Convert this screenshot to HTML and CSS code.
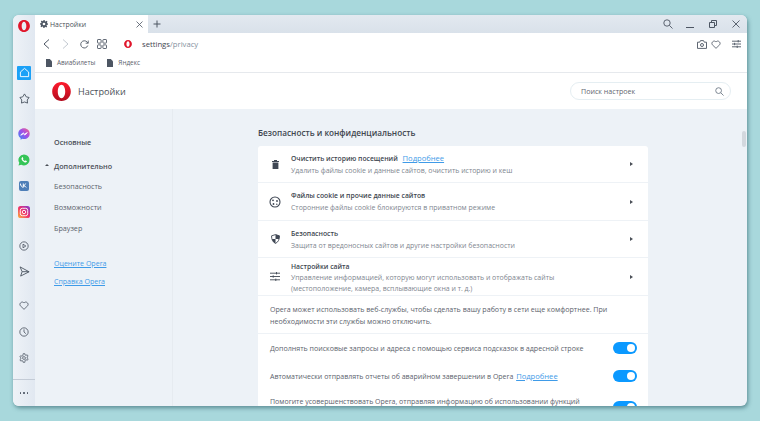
FILE: index.html
```html
<!DOCTYPE html>
<html lang="ru">
<head>
  <meta charset="UTF-8">
  <title>Настройки</title>
  <link rel="stylesheet" href="styles.css">
</head>
<body>
  <div class="window">
    <!-- left rail with sidebar shortcuts -->
    <aside class="rail">
      <div class="slot slot-logo">
        <svg width="12" height="12" viewBox="0 0 20 20"><path fill="#e0162b" fill-rule="evenodd" d="M10 0c5.600 0 9.800 4.400 9.800 10S15.600 20 10 20 .2 15.600.2 10 4.400 0 10 0zm0 3c-2.200 0-3.900 3-3.900 7s1.700 7 3.900 7 3.900-3 3.900-7-1.700-7-3.900-7z"/></svg>
      </div>
      <div class="slot slot-home">
        <span class="home-box">
          <svg width="11" height="11" viewBox="0 0 12 12" fill="none" stroke="#fff" stroke-width="1"><path d="M1.500 5.500 6 1.500l4.500 4v5h-9z"/></svg>
        </span>
      </div>
      <div class="slot">
        <svg width="11" height="11" viewBox="0 0 12 12" fill="none" stroke="#4d5663" stroke-width="1" stroke-linejoin="round"><path d="M6 1 7.900 4.200 11 4.900 9 7.600 9.300 11 6 9.800 2.700 11 3 7.600 1 4.900 4.100 4.200z"/></svg>
      </div>
      <div class="slot slot-gap">
        <svg width="12" height="12" viewBox="0 0 12 12"><defs><linearGradient id="msg" x1="0" y1="1" x2="1" y2="0"><stop offset="0" stop-color="#2f8bf5"/><stop offset=".55" stop-color="#a44ee8"/><stop offset="1" stop-color="#f76b7e"/></linearGradient></defs><path fill="url(#msg)" d="M6 .3c3.200 0 5.700 2.300 5.700 5.400S9.200 11 6 11c-.6 0-1.100-.1-1.600-.2L2.600 11.700V10C1.100 9 .3 7.500.3 5.700.3 2.600 2.800.3 6 .3z"/><path fill="none" stroke="#fff" stroke-width=".9" d="M2.700 7.200 5 4.800l1.600 1.300 2.700-1.500-2.300 2.500-1.600-1.300z"/></svg>
      </div>
      <div class="slot">
        <svg width="12" height="12" viewBox="0 0 12 12"><path fill="#35c457" d="M6 .4a5.500 5.500 0 0 1 0 11c-1 0-1.900-.2-2.700-.7L.5 11.500l.8-2.700A5.500 5.500 0 0 1 6 .4z"/><path fill="#fff" d="M4.300 3.200c-.8.500-1 1.400-.6 2.300.6 1.300 1.700 2.300 3 2.900.9.300 1.700 0 2.100-.7.200-.3.100-.6-.1-.7l-1-.5c-.3-.1-.5 0-.6.200l-.3.400c-.8-.3-1.500-1-1.900-1.800l.3-.4c.1-.2.100-.4 0-.6l-.4-1c-.1-.3-.3-.3-.5-.1z"/></svg>
      </div>
      <div class="slot">
        <span class="vk-box">
          <svg width="8" height="5" viewBox="0 0 8 5" fill="none" stroke="#fff" stroke-width="1"><path d="M.3.500c.4 2.400 1.500 3.700 3 3.800V.500M3.300 2.600C4.600 2.400 5.300 1.500 5.600.500M3.300 2.500c1.300.2 2.300.9 2.900 2"/></svg>
        </span>
      </div>
      <div class="slot">
        <svg width="12" height="12" viewBox="0 0 12 12"><defs><linearGradient id="ig" x1="0" y1="1" x2="1" y2="0"><stop offset="0" stop-color="#fdb33b"/><stop offset=".5" stop-color="#ee2f6d"/><stop offset="1" stop-color="#7c3fd6"/></linearGradient></defs><rect width="12" height="12" rx="2.600" fill="url(#ig)"/><rect x="2.300" y="2.300" width="7.400" height="7.400" rx="2" fill="none" stroke="#fff" stroke-width=".9"/><circle cx="6" cy="6" r="1.700" fill="none" stroke="#fff" stroke-width=".9"/></svg>
      </div>
      <div class="slot slot-gap-sm">
        <svg width="10" height="10" viewBox="0 0 12 12" fill="none" stroke="#4d5663" stroke-width="1"><circle cx="6" cy="6" r="5"/><path d="M4.800 3.800v4.400L8.200 6z"/></svg>
      </div>
      <div class="slot">
        <svg width="11" height="11" viewBox="0 0 12 12" fill="none" stroke="#4d5663" stroke-width="1"><path d="M1.200 1 11 6.300 1.800 11l1.600-4.800zM3.400 6.200H11"/></svg>
      </div>
      <div class="slot slot-gap-sm">
        <svg width="10" height="9" viewBox="0 0 12 11" fill="none" stroke="#4d5663" stroke-width="1"><path d="M6 10.200 1.500 5.800C-.5 3.400 3.500-.8 6 2.500 8.500-.8 12.500 3.400 10.500 5.800z"/></svg>
      </div>
      <div class="slot">
        <svg width="10" height="10" viewBox="0 0 12 12" fill="none" stroke="#4d5663" stroke-width="1"><circle cx="6" cy="6" r="5"/><path d="M6 2.800V6l2.200 2"/></svg>
      </div>
      <div class="slot">
        <svg width="10" height="10" viewBox="0 0 12 12" fill="none" stroke="#4d5663" stroke-width=".9"><circle cx="6" cy="6" r="1.700"/><path d="M5 .8h2l.3 1.600 1.100.5 1.400-.8 1.100 1.700-1.200 1 .1 1.300 1.200 1-1.100 1.700-1.400-.8-1.100.6L7 11.200H5l-.3-1.600-1.100-.6-1.400.8L1.100 8.100l1.200-1-.1-1.300-1.200-1 1.100-1.700 1.400.8 1.100-.5z"/></svg>
      </div>
      <div class="rail-foot">
        <span class="dots">
          <i></i><i></i><i></i>
        </span>
      </div>
    </aside>

    <div class="browser">
      <!-- tab strip -->
      <div class="tabstrip">
        <div class="tab">
          <svg width="8" height="8" viewBox="0 0 12 12"><path fill="#4d5663" fill-rule="evenodd" d="M5 0h2l.3 1.700 1.100.5 1.500-1 1.400 1.400-1 1.500.5 1.100L12 5v2l-1.700.3-.5 1.100 1 1.500-1.400 1.400-1.500-1-1.100.5L7 12H5l-.3-1.700-1.100-.5-1.500 1L.7 9.400l1-1.500-.5-1.100L0 7V5l1.700-.3.5-1.100-1-1.500L2.600.7l1.500 1 1.100-.5zM6 4a2 2 0 1 0 0 4 2 2 0 0 0 0-4z"/></svg>
          <span class="tab-title">Настройки</span>
          <svg class="tab-close" width="7" height="7" viewBox="0 0 7 7" stroke="#4d5663" stroke-width=".8"><path d="M.5.500l6 6M6.500.500l-6 6"/></svg>
        </div>
        <svg class="tab-add" width="8" height="8" viewBox="0 0 8 8" stroke="#4d5663" stroke-width="1"><path d="M4 .5v7M.5 4h7"/></svg>
        <div class="win-controls">
          <svg class="ctl-search" width="10" height="10" viewBox="0 0 10 10" fill="none" stroke="#4d5663" stroke-width=".9"><circle cx="4" cy="4" r="3.200"/><path d="M6.400 6.400 9.500 9.500"/></svg>
          <svg width="8" height="8" viewBox="0 0 8 8" stroke="#4d5663" stroke-width="1"><path d="M0 7.500h8"/></svg>
          <svg width="8" height="8" viewBox="0 0 8 8" fill="none" stroke="#4d5663" stroke-width="1"><path d="M.5 2.500h5v5h-5zM2.500 2.500v-2h5v5h-2"/></svg>
          <svg width="8" height="8" viewBox="0 0 8 8" stroke="#4d5663" stroke-width=".9"><path d="M.5.500l7 7M7.500.500l-7 7"/></svg>
        </div>
      </div>

      <!-- address bar -->
      <div class="addressbar">
        <svg width="7" height="10" viewBox="0 0 7 10" fill="none" stroke="#4d5663" stroke-width="1"><path d="M6 .5 1 5l5 4.500"/></svg>
        <svg class="btn-forward" width="7" height="10" viewBox="0 0 7 10" fill="none" stroke="#c3c9d1" stroke-width="1"><path d="M1 .5 6 5 1 9.500"/></svg>
        <svg class="btn-reload" width="9" height="9" viewBox="0 0 10 10" fill="none" stroke="#4d5663" stroke-width="1"><path d="M8.600 6.200A4 4 0 1 1 7.800 2.200L9 3.300"/><path d="M9.200 .6v3H6.300" stroke-width=".9"/></svg>
        <svg class="btn-grid" width="10" height="10" viewBox="0 0 10 10" fill="none" stroke="#4d5663" stroke-width=".9"><rect x=".5" y=".5" width="3.600" height="3.600" rx=".6"/><rect x="5.900" y=".5" width="3.600" height="3.600" rx=".6"/><rect x=".5" y="5.900" width="3.600" height="3.600" rx=".6"/><rect x="5.900" y="5.900" width="3.600" height="3.600" rx=".6"/></svg>
        <svg class="addr-logo" width="8" height="8" viewBox="0 0 20 20"><path fill="#e0162b" fill-rule="evenodd" d="M10 0c5.600 0 9.800 4.400 9.800 10S15.600 20 10 20 .2 15.600.2 10 4.400 0 10 0zm0 3c-2.200 0-3.900 3-3.900 7s1.700 7 3.900 7 3.900-3 3.900-7-1.700-7-3.900-7z"/></svg>
        <span class="url">settings<span class="url-path">/privacy</span></span>
        <div class="addr-tools">
          <svg width="10" height="9" viewBox="0 0 10 9" fill="none" stroke="#4d5663" stroke-width=".9"><path d="M.5 2.200h2.200L3.500.6h3l.8 1.600h2.200v6.200h-9z"/><circle cx="5" cy="5" r="1.500"/></svg>
          <svg width="10" height="9" viewBox="0 0 12 11" fill="none" stroke="#4d5663" stroke-width="1"><path d="M6 10.200 1.500 5.800C-.5 3.400 3.500-.8 6 2.500 8.500-.8 12.500 3.400 10.500 5.800z"/></svg>
          <svg class="tool-menu" width="9" height="8" viewBox="0 0 9 8" fill="none" stroke="#4d5663" stroke-width=".9"><path d="M0 1.200h9M0 4h9M0 6.800h9M6.200 0v2.400M2.600 2.800v2.400M5.200 5.600V8"/></svg>
        </div>
      </div>

      <!-- bookmarks -->
      <div class="bookmarks">
        <span class="bookmark">
          <svg width="6" height="8" viewBox="0 0 6 8"><path fill="#4d5663" d="M0 0h3.800L6 2.200V8H0z"/></svg>
          Авиабилеты
        </span>
        <span class="bookmark">
          <svg width="6" height="8" viewBox="0 0 6 8"><path fill="#4d5663" d="M0 0h3.800L6 2.200V8H0z"/></svg>
          Яндекс
        </span>
      </div>

      <!-- settings page -->
      <header class="page-head">
        <svg width="19" height="19" viewBox="0 0 20 20"><defs><linearGradient id="logo" x1="0" y1="0" x2="0" y2="1"><stop offset="0" stop-color="#ff1b2d"/><stop offset="1" stop-color="#b20c1f"/></linearGradient></defs><path fill="url(#logo)" fill-rule="evenodd" d="M10 0c5.600 0 9.800 4.400 9.800 10S15.600 20 10 20 .2 15.600.2 10 4.400 0 10 0zm0 3c-2.200 0-3.900 3-3.900 7s1.700 7 3.900 7 3.900-3 3.900-7-1.700-7-3.900-7z"/></svg>
        <h1 class="page-title">Настройки</h1>
        <div class="search">
          <span>Поиск настроек</span>
          <svg width="9" height="9" viewBox="0 0 10 10" fill="none" stroke="#6f7a87" stroke-width="1"><circle cx="4" cy="4" r="3.200"/><path d="M6.400 6.400 9.500 9.500"/></svg>
        </div>
      </header>

      <div class="page-body">
        <nav class="side-nav">
          <a class="nav-item nav-strong">Основные</a>
          <a class="nav-item nav-strong nav-open">Дополнительно</a>
          <a class="nav-item">Безопасность</a>
          <a class="nav-item">Возможности</a>
          <a class="nav-item">Браузер</a>
          <a class="nav-link nav-link-first">Оцените Opera</a>
          <a class="nav-link">Справка Opera</a>
        </nav>

        <main class="content">
          <h2 class="section-title">Безопасность и конфиденциальность</h2>
          <div class="card">
            <div class="row row-clear">
              <span class="row-icon">
                <svg width="7" height="9" viewBox="0 0 7 9"><path fill="#3f4754" d="M0 1h2V0h3v1h2v1H0zM.6 2.600h5.800V9H.6z"/></svg>
              </span>
              <div class="row-text">
                <div class="row-title">Очистить историю посещений <a class="more">Подробнее</a></div>
                <div class="row-sub">Удалить файлы cookie и данные сайтов, очистить историю и кеш</div>
              </div>
              <i class="arrow"></i>
            </div>
            <div class="row row-cookie">
              <span class="row-icon">
                <svg width="12" height="12" viewBox="0 0 12 12"><circle cx="6" cy="6" r="5" fill="none" stroke="#3f4754" stroke-width="1.100"/><g fill="#3f4754"><circle cx="4" cy="4.300" r=".9"/><circle cx="8" cy="5" r=".9"/><circle cx="4.500" cy="8" r=".9"/><circle cx="7.800" cy="8.200" r=".7"/></g></svg>
              </span>
              <div class="row-text">
                <div class="row-title">Файлы cookie и прочие данные сайтов</div>
                <div class="row-sub">Сторонние файлы cookie блокируются в приватном режиме</div>
              </div>
              <i class="arrow"></i>
            </div>
            <div class="row row-security">
              <span class="row-icon">
                <svg width="9" height="10" viewBox="0 0 10 11"><path fill="none" stroke="#3f4754" stroke-width="1" d="M5 .6 9.400 2c0 4-1.200 6.800-4.400 8.400C1.800 8.800.6 6 .6 2z"/><path fill="#3f4754" d="M5 .6 9.400 2c0 1.200-.1 2.400-.4 3.400H5zM5 5.400v5C3 9.400 1.800 7.700 1.100 5.400z"/></svg>
              </span>
              <div class="row-text">
                <div class="row-title">Безопасность</div>
                <div class="row-sub">Защита от вредоносных сайтов и другие настройки безопасности</div>
              </div>
              <i class="arrow"></i>
            </div>
            <div class="row row-site">
              <span class="row-icon">
                <svg width="10" height="9" viewBox="0 0 10 9" fill="none" stroke="#3f4754" stroke-width=".9"><path d="M0 1.200h10M0 4.500h10M0 7.800h10M6.500 0v2.400M3.200 3.300v2.400M5.800 6.600V9"/></svg>
              </span>
              <div class="row-text">
                <div class="row-title">Настройки сайта</div>
                <div class="row-sub">Управление информацией, которую могут использовать и отображать сайты<br>(местоположение, камера, всплывающие окна и т. д.)</div>
              </div>
              <i class="arrow"></i>
            </div>
            <div class="note">Opera может использовать веб-службы, чтобы сделать вашу работу в сети еще комфортнее. При необходимости эти службы можно отключить.</div>
            <div class="option option-first">
              <span>Дополнять поисковые запросы и адреса с помощью сервиса подсказок в адресной строке</span>
              <i class="toggle"></i>
            </div>
            <div class="option">
              <span>Автоматически отправлять отчеты об аварийном завершении в Opera <a class="more more-gap">Подробнее</a></span>
              <i class="toggle"></i>
            </div>
            <div class="option option-tall">
              <span>Помогите усовершенствовать Opera, отправляя информацию об использовании функций</span>
              <i class="toggle"></i>
            </div>
          </div>
        </main>
        <div class="scroll-thumb"></div>
      </div>
    </div>
  </div>
</body>
</html>
```

FILE: styles.css
```css
* {
  box-sizing: border-box;
}
html, body {
  height: 100%;
}
body {
  margin: 0;
  padding: 15px 13px;
  background-color: #a8d8dc;
  font-family: 'Open Sans', 'Liberation Sans', sans-serif;
  color: #4a4f57;
  overflow: hidden;
}
svg {
  display: block;
  flex: none;
}

.window {
  display: flex;
  width: 734px;
  height: 391px;
  border-radius: 6px;
  overflow: hidden;
  background-color: #edf2f7;
  box-shadow: 1px 2px 4px rgba(40, 90, 100, 0.6);
}

/* sidebar rail */
.rail {
  width: 22px;
  flex: none;
  display: flex;
  flex-direction: column;
  background: linear-gradient(to right, #eef2f7, #e1e8f1);
}
.slot {
  height: 26px;
  flex: none;
  display: flex;
  align-items: center;
  justify-content: center;
}
.slot-logo {
  height: 22px;
}
.slot-home {
  margin-top: 22.500px;
}
.slot-gap {
  margin-top: 9px;
}
.slot-gap-sm {
  margin-top: 8px;
}
.home-box {
  width: 14px;
  height: 14px;
  border-radius: 1px;
  background-color: #1ba1f7;
  display: flex;
  align-items: center;
  justify-content: center;
}
.vk-box {
  width: 10px;
  height: 10px;
  border-radius: 2px;
  background-color: #4f7fb8;
  display: flex;
  align-items: center;
  justify-content: center;
}
.rail-foot {
  margin-top: auto;
  height: 27px;
  border-top: 1px solid #c3cbd6;
  display: flex;
  align-items: center;
  justify-content: center;
}
.dots {
  display: flex;
  gap: 2px;
}
.dots i {
  width: 1.500px;
  height: 1.500px;
  border-radius: 50%;
  background-color: #4d5663;
}

.browser {
  flex: 1;
  min-width: 0;
  display: flex;
  flex-direction: column;
}

/* tabs and window buttons */
.tabstrip {
  height: 18px;
  flex: none;
  display: flex;
  align-items: center;
  background: linear-gradient(to bottom, #e3e9f0, #d9e1ea);
}
.tab {
  width: 113px;
  height: 18px;
  padding: 0 4px 0 5px;
  display: flex;
  align-items: center;
  gap: 2px;
  background-color: #fff;
  font-size: 6.900px;
  color: #4a4f57;
}
.tab-title {
  flex: 1;
}
.tab-close {
  margin-right: 1px;
}
.tab-add {
  margin-left: 5px;
}
.win-controls {
  margin-left: auto;
  padding-right: 7px;
  display: flex;
  align-items: center;
  gap: 15px;
}
.ctl-search {
  margin-right: -2px;
}

/* address bar */
.addressbar {
  height: 22px;
  flex: none;
  padding: 0 6px 0 8px;
  display: flex;
  align-items: center;
  background-color: #fff;
}
.btn-forward {
  margin-left: 12px;
}
.btn-reload {
  margin-left: 11px;
}
.btn-grid {
  margin-left: 8px;
}
.addr-logo {
  margin-left: 17px;
}
.url {
  margin-left: 10px;
  font-size: 7.700px;
  color: #3f4650;
}
.url-path {
  color: #84909e;
}
.addr-tools {
  margin-left: auto;
  display: flex;
  align-items: center;
  gap: 4px;
}
.tool-menu {
  margin-left: 7px;
}

.bookmarks {
  height: 18px;
  flex: none;
  padding: 0 0 2px 11px;
  display: flex;
  align-items: center;
  gap: 12px;
  background-color: #fff;
  border-bottom: 1px solid #e6e9ed;
  font-size: 6.400px;
  color: #5b626c;
}
.bookmark {
  display: flex;
  align-items: center;
  gap: 5px;
}

/* settings header */
.page-head {
  height: 36px;
  flex: none;
  padding: 0 16px 0 17px;
  display: flex;
  align-items: center;
  background-color: #fff;
}
.page-title {
  margin: 0 0 0 7px;
  font-size: 9.100px;
  font-weight: 400;
  color: #4a4f57;
}
.search {
  margin-left: auto;
  width: 161px;
  height: 18px;
  padding: 0 6px 0 10px;
  display: flex;
  align-items: center;
  justify-content: space-between;
  border: 1px solid #e5eef2;
  border-radius: 9px;
  font-size: 7.100px;
  color: #5f6670;
}

.page-body {
  flex: 1;
  min-height: 0;
  position: relative;
  display: flex;
  overflow: hidden;
}

/* left settings menu */
.side-nav {
  width: 138px;
  flex: none;
  padding: 26px 0 0 19px;
  display: flex;
  flex-direction: column;
  align-items: flex-start;
  border-right: 1px solid #e6ebf0;
  font-size: 7.200px;
  color: #5b626c;
}
.nav-item {
  height: 21px;
  line-height: 14px;
}
.nav-strong {
  font-weight: 600;
  color: #4a4f57;
}
.nav-open {
  position: relative;
  height: 20px;
  margin-top: 3px;
}
.nav-open::before {
  content: "";
  position: absolute;
  left: -9px;
  top: 5px;
  border: 2px solid transparent;
  border-top: 0;
  border-bottom: 2.500px solid #4a4f57;
}
.nav-link {
  height: 18px;
  line-height: 14px;
  font-size: 7.050px;
  color: #3f9be8;
  text-decoration: underline;
}
.nav-link-first {
  margin-top: 14px;
}

/* main column */
.content {
  width: 476px;
  flex: none;
  padding-left: 85px;
}
.section-title {
  margin: 0;
  height: 37px;
  padding-top: 17px;
  font-size: 8.200px;
  line-height: 14px;
  font-weight: 600;
  color: #40464f;
}
.card {
  width: 390px;
  border-radius: 3px 3px 0 0;
  background-color: #fff;
}
.row {
  padding: 0 15px 0 0;
  display: flex;
  align-items: center;
  border-bottom: 1px solid #eef2f6;
}
.row-clear {
  height: 37px;
}
.row-cookie {
  height: 38px;
}
.row-security {
  height: 37px;
}
.row-site {
  height: 38px;
}
.row-icon {
  width: 33px;
  flex: none;
  padding-left: 1px;
  display: flex;
  justify-content: center;
}
.row-text {
  flex: 1;
  padding-top: 1px;
  font-size: 6.950px;
  line-height: 12px;
}
.row-site .row-text {
  line-height: 11px;
}
.row-title {
  font-size: 6.800px;
  font-weight: 600;
  color: #40464f;
}
.row-sub {
  color: #80868f;
}
.more {
  margin-left: 3px;
  font-size: 7.600px;
  color: #3f9be8;
  text-decoration: underline;
  font-weight: 400;
}
.more-gap {
  margin-left: 1px;
}
.arrow {
  width: 0;
  height: 0;
  border-left: 3px solid #4a4f57;
  border-top: 2.500px solid transparent;
  border-bottom: 2.500px solid transparent;
}
.note {
  height: 38px;
  padding: 7px 30px 0 12px;
  border-bottom: 1px solid #eef2f6;
  font-size: 7.100px;
  line-height: 12px;
  color: #5b626c;
}
.option {
  height: 27.500px;
  padding: 0 11px 0 12px;
  display: flex;
  align-items: center;
  justify-content: space-between;
  font-size: 7px;
  color: #5b626c;
}
.option-first {
  height: 28px;
  font-size: 7.080px;
}
/* the last option runs past the bottom of the window */
.option-tall {
  height: 34px;
  padding-top: 7px;
  align-items: flex-start;
  line-height: 10px;
}
.option-tall .toggle {
  margin-top: 4px;
}
.toggle {
  position: relative;
  width: 24px;
  height: 12px;
  flex: none;
  border-radius: 6px;
  background-color: #0b99ff;
}
.toggle::after {
  content: "";
  position: absolute;
  right: 2px;
  top: 2px;
  width: 8px;
  height: 8px;
  border-radius: 50%;
  background-color: #fff;
}

.scroll-thumb {
  position: absolute;
  right: 1px;
  top: 22px;
  width: 4px;
  height: 16px;
  border-radius: 2px;
  background-color: #d3d8de;
}
```
